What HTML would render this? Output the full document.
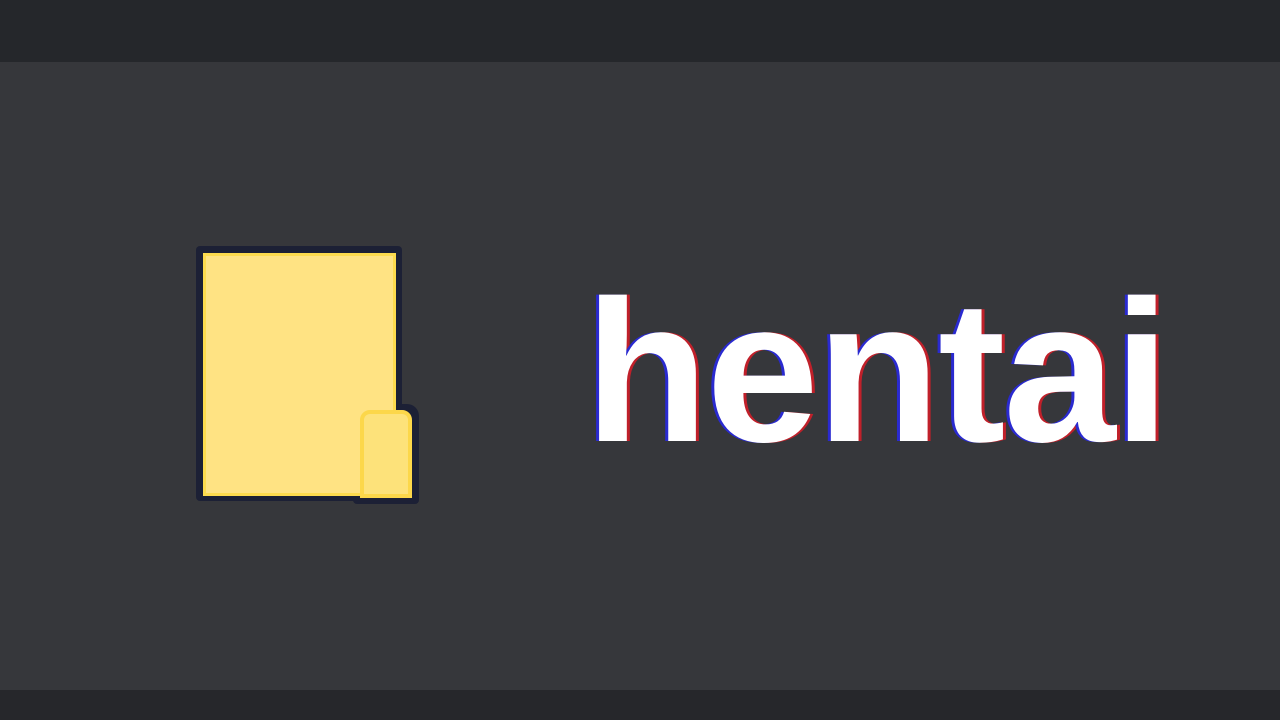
<!DOCTYPE html>
<html><head><style>
body{margin:0;width:1280px;height:720px;background:#36373b;position:relative;overflow:hidden;font-family:"Liberation Sans",sans-serif}
.top{position:absolute;left:0;top:0;width:1280px;height:62px;background:#25272b}
.bot{position:absolute;left:0;top:690px;width:1280px;height:30px;background:#26272b}
.f{position:absolute;left:196px;top:246px;width:206px;height:255px;background:#1c2035;border-radius:4px}
.f1{position:absolute;left:203px;top:253px;width:193px;height:243px;background:#ffe383;border:3px solid #fddb4e;box-sizing:border-box}
.t1{position:absolute;left:360px;top:410px;width:52px;height:88px;background:#fde27a;border:4px solid #fcd74a;border-radius:10px 10px 0 0;box-sizing:border-box}
.tb{position:absolute;left:353px;top:404px;width:66px;height:100px;background:#1c2035;border-radius:12px 12px 4px 4px}
.txt{position:absolute;left:585px;top:246px;font-size:202px;line-height:250px;color:#fff;font-weight:bold;letter-spacing:-2px;text-shadow:-3px 0 #2a2ad0,3px 0 #c0202a}
</style></head><body>
<div class="top"></div><div class="bot"></div>
<div class="f"></div><div class="tb"></div><div class="f1"></div><div class="t1"></div>
<div class="txt">hentai</div>
</body></html>
